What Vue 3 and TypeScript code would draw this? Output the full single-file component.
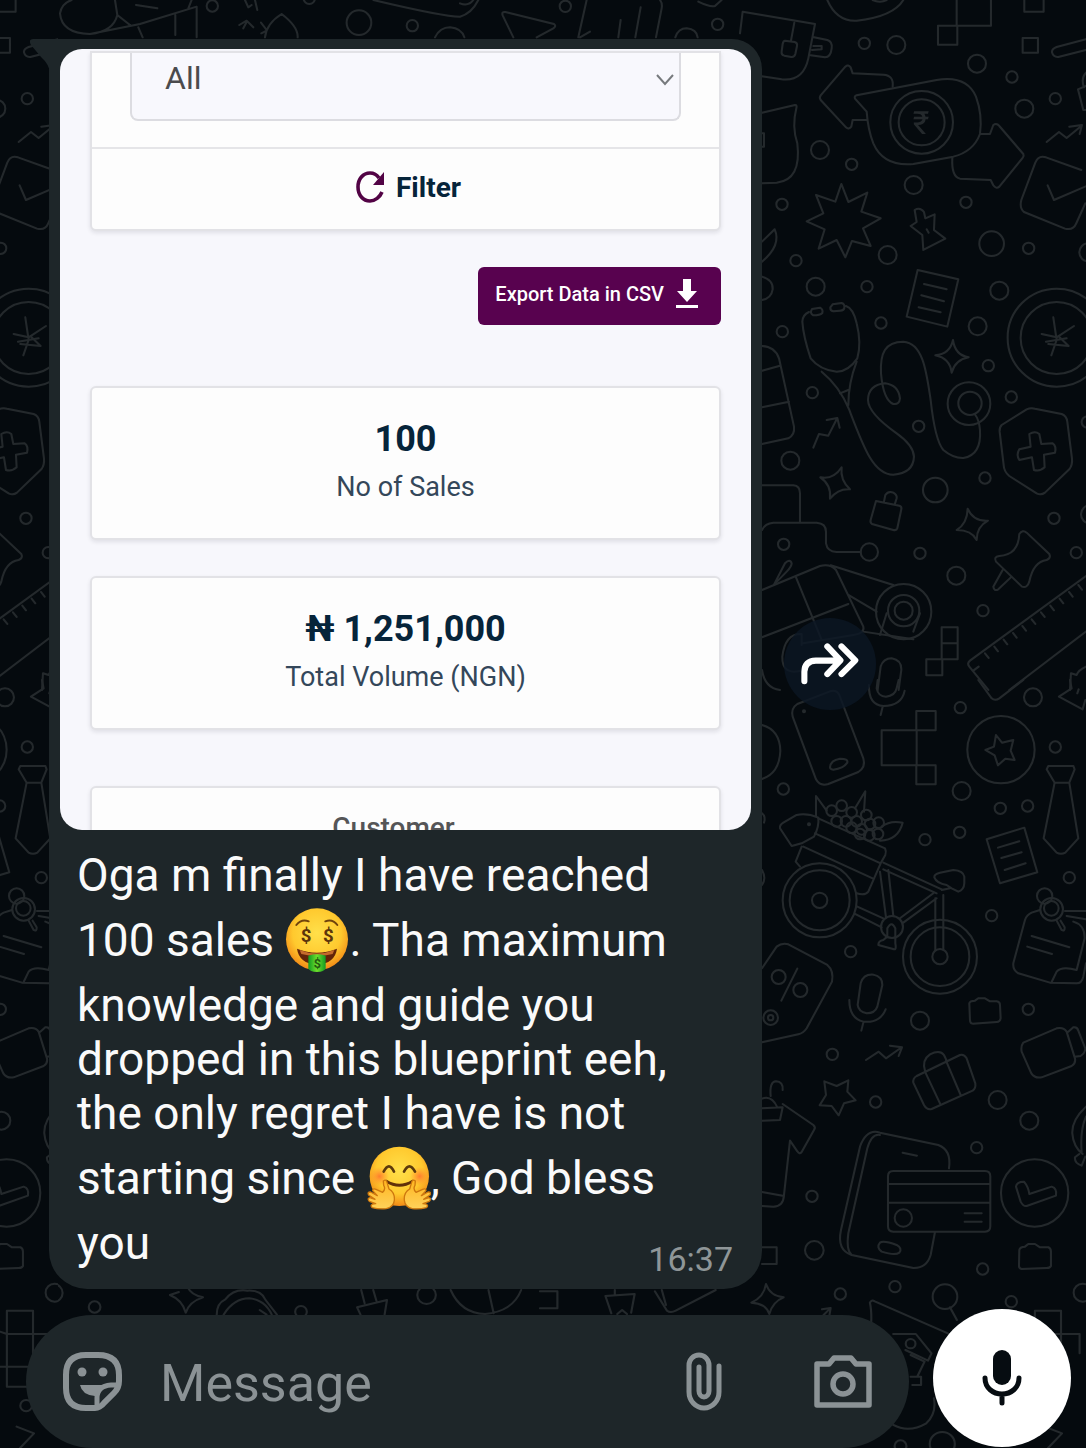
<script setup lang="ts">
import { ref } from 'vue'

interface Doodle {
  transform: string
  /** x, y, radius */
  circles: number[][]
  paths: string[]
}

const draft = ref('')
const filter = ref('All')

const stats = [
  { value: '100', label: 'No of Sales' },
  { value: '₦ 1,251,000', label: 'Total Volume (NGN)' },
]

// Wallpaper line art, grouped by area. Each group has its own local grid.
const doodles: Doodle[] = [
  {
    transform: 'scale(.3333)',
    circles: [[637, 18, 17], [1077, 68, 37], [928, -5, 17]],
    paths: [
      'M345 0L352 45Q340 95 270 102Q185 100 180 40Q185 10 215 0M352 45L390 75M270 102L420 72L590 20V112M526 45V105M415 82L428 112M408 15L472 25M575 0L565 25',
      'M735 0L745 22L755 15M765 0L772 30M718 75L740 62L760 82M730 85L740 66M783 68L800 90M795 112Q800 70 845 42Q895 80 893 112M784 100L800 92',
    ],
  },
  {
    transform: 'translate(400 0) scale(.3333)',
    circles: [[37, 77, 17], [496, 19, 17], [953, 73, 17]],
    paths: [
      'M-80 0Q130 50 180 50Q215 40 235 0M180 10Q205 20 220 0M105 112Q120 82 150 82Q185 85 193 112M340 112L308 46Q304 35 316 36L462 72Q470 78 460 85L410 112',
      'M560 0L535 112M780 0Q788 10 785 25L768 112M722 22L706 112M662 60L655 112M540 112L570 95M826 112Q835 85 860 85Q890 88 893 112M895 5Q930 22 945 18L965 0',
    ],
  },
  {
    transform: 'translate(740 0) scale(.3333)',
    circles: [
      [373, 130, 17], [816, 231, 17], [946, 296, 17], [335, 493, 17], [126, 613, 17], [678, 607, 17],
      [866, 745, 17], [168, 782, 17], [381, 860, 17], [423, 969, 17], [127, 995, 17],
      [469, 135, 27], [711, 191, 27], [853, 326, 27], [240, 450, 27], [521, 555, 27], [443, 765, 27],
      [227, 860, 27], [778, 872, 27], [713, 979, 27], [755, 731, 37], [1045, 757, 27],
      [545, 367, 94], [545, 367, 69], [950, 1013, 147], [950, 1014, 108],
    ],
    paths: [
      'M0 100L8 35L225 72L205 175Q190 245 125 238L60 228M163 68L153 122M135 122L164 126Q173 128 171 138L166 162Q163 172 154 171L133 167Q123 164 125 154L128 132Q130 122 135 122ZM222 112L262 120Q278 125 275 145Q272 172 255 172L212 166M220 138H245V148L216 150',
      'M262 0Q290 65 350 62Q460 50 490 0M398 0Q420 10 440 0',
      'M650 0V77H753V0M594 77H652V134H594ZM853 0V35H911V0M848 114H894V158H848Z',
      'M1038 118L950 141Q935 147 936 157Q940 172 955 171L1038 150M1038 218Q1022 235 1032 262M1038 258L1014 268L1030 330H1038',
      'M920 426L957 396L980 414L1024 378M988 380L1026 375L1019 402',
      'M458 260Q462 226 430 224L338 220L332 202Q325 192 316 200L242 286Q237 293 242 300L318 382Q326 390 334 380L338 360H380',
      'M350 286L590 240Q680 225 708 290Q728 345 720 402Q700 455 640 470L520 492Q430 500 400 430Q384 390 380 335L345 296Q342 288 350 286Z',
      'M722 402H750L760 375Q770 368 778 378L850 462Q853 468 848 474L778 560Q768 568 760 556L752 540L660 536Q634 530 637 474',
      'M1024 510L918 472Q895 465 886 488L844 600Q838 625 852 636L975 686Q1000 692 1008 672L1036 610M923 556L942 600L1040 558',
      'M66 338L165 315Q172 315 169 325Q155 380 172 430Q185 540 110 548L66 550M66 400H72V440H66',
      'M304 552L325 606L382 578L364 635L422 655L369 685L392 738L336 723L316 772L290 720L236 746L254 688L200 664L250 640L228 585L286 605Z',
      'M524 630Q540 620 552 636L556 655L584 643L582 690L616 716L550 750L547 705L512 678L530 666ZM560 688L566 698',
      'M66 725L104 688Q125 735 66 785M66 830Q100 840 98 868Q94 895 66 900',
      'M533 810L655 838L622 980L500 950ZM552 852L620 868M544 886L612 904M536 922L602 937',
    ],
  },
  {
    transform: 'translate(740 330) scale(.3333)',
    circles: [
      [217, 188, 17], [745, 107, 17], [814, 201, 17], [536, 289, 17], [735, 444, 17], [131, 643, 17],
      [540, 670, 17], [942, 565, 17], [1009, 668, 17], [729, 842, 17], [1042, 276, 17],
      [151, 392, 27], [388, 666, 26], [649, 737, 27], [1050, 553, 27], [586, 480, 37],
      [491, 845, 83], [491, 842, 47], [491, 842, 27], [687, 221, 64], [690, 220, 35],
    ],
    paths: [
      'M318 -72Q340 -65 350 -20Q365 40 352 85Q325 125 290 125Q240 120 212 85Q190 20 187 -25Q188 -46 207 -54M278 -77L305 -81Q315 -78 313 -66Q312 -59 300 -58L280 -56Q270 -58 271 -68ZM216 -63L240 -67Q250 -62 247 -51Q240 -44 220 -44Q208 -50 216 -63Z',
      'M245 125Q300 170 328 240C370 350 400 434 460 434Q520 430 522 380Q520 345 470 310Q385 250 384 210Q385 165 435 160Q475 165 480 205Q478 225 460 222Q430 210 423 130C420 70 435 35 490 35C550 38 560 130 572 210Q585 330 610 360Q640 385 670 384Q725 375 720 300Q718 270 704 252M350 95Q325 160 325 225M300 190L325 180',
      'M940 -38L950 30L934 76M1002 -12L950 22L905 12M918 35L980 25M925 42L986 48L955 18',
      'M639 30Q645 75 686 82Q645 90 635 128Q630 85 586 76Q630 72 639 30ZM305 412Q300 450 330 478Q295 475 270 506Q275 465 241 442Q280 450 305 412ZM683 536Q700 575 744 572Q710 590 710 630Q695 600 650 600Q682 580 683 536Z',
      'M220 353L237 312L265 317L290 268M260 270L292 264L299 293',
      'M66 48Q105 50 117 85L162 290Q165 315 145 325L66 342M66 122L120 107M66 232L147 215',
      'M785 285L860 238Q872 233 885 236L965 252Q980 258 982 275L996 385Q998 405 988 418L915 488Q903 497 890 490L808 438Q792 425 791 405L779 305Q778 292 785 285Z',
      'M868 312Q885 302 898 312L904 342L938 340Q950 348 945 368L912 374L914 412Q900 425 882 420L876 382L838 390Q828 375 838 358L872 350Z',
      'M408 513L478 527Q486 530 484 538L472 595Q470 602 460 600L396 582Q390 578 392 570ZM432 515L436 495Q445 482 460 488Q472 495 470 505L464 524',
      'M66 466H160Q180 467 180 490V576M66 600Q75 580 100 578H230Q258 580 258 605V640Q262 665 290 666H362M102 764L135 700Q150 685 155 700Q155 710 140 725Z',
      'M66 780L240 708Q270 700 288 720L370 890Q375 910 340 915L190 940M168 742L245 930M66 922L325 822M272 706L460 765M325 795L410 845M370 905L520 928M420 915L440 850M520 905L540 850M190 1020Q125 1040 127 980Q135 910 185 912V945M66 1020Q75 1075 120 1080',
      'M838 612Q848 598 860 608L928 672Q934 684 920 690Q880 695 868 755Q862 775 846 770L768 695Q760 680 778 678Q835 675 838 612ZM788 720L760 770Q762 785 775 778L815 740',
      'M1038 738L690 992Q680 1000 688 1010L745 1080M1038 905L808 1080M700 1022L716 1010M735 970L746 984M763 950L774 964M791 929L802 943M819 909L830 923M847 888L858 902M875 868L886 882M903 847L914 861M931 827L942 841M959 806L970 820M987 786L998 800M1015 765L1026 779',
      'M605 892H653V988H605ZM605 940H653M559 988H607V1036H559ZM413 1080L422 1010Q430 985 455 985Q485 990 484 1020L476 1080M1038 1010Q1015 1020 1010 1035L993 1030L990 1080',
    ],
  },
  {
    transform: 'translate(740 680) scale(.3333)',
    circles: [
      [661, 83, 17], [946, 201, 17], [130, 327, 17], [781, 385, 17], [863, 378, 17], [659, 457, 17],
      [555, 479, 17], [988, 593, 17], [755, 707, 17], [332, 815, 17], [865, 988, 17],
      [879, 52, 27], [665, 333, 27], [540, 1022, 27], [783, 209, 101],
      [239, 661, 111], [239, 661, 90], [239, 661, 23], [600, 830, 111], [600, 830, 88], [600, 830, 23], [456, 741, 33],
      [275, 392, 16], [305, 377, 16], [335, 397, 16], [290, 424, 16], [318, 424, 16], [350, 424, 16], [379, 405, 16],
      [335, 443, 16], [365, 448, 16], [390, 432, 16], [416, 428, 16], [360, 462, 16], [388, 466, 16], [414, 462, 16],
      [116, 891, 21], [181, 930, 21], [92, 1013, 22], [92, 1013, 8], [914, 648, 23], [934, 685, 22], [935, 688, 34], [192, 94, 3], [207, 433, 3],
    ],
    paths: [
      'M413 0L410 25Q415 50 438 50Q465 48 470 25L476 0M387 15Q385 75 430 78Q485 78 494 32M428 80L422 105',
      'M66 135Q120 150 121 213Q118 280 66 297M66 400Q78 410 72 428M66 570Q80 595 66 615',
      'M172 72L270 34Q290 28 298 45L370 235Q378 262 355 276L265 312Q240 320 228 298L158 110Q152 85 172 72ZM270 262Q272 240 300 236Q325 236 322 248Q310 266 280 269Q270 268 270 262Z',
      'M425 151H530V256H425ZM529 93H587V151H529ZM529 256H587V313H529Z',
      'M768 165L786 188L820 180L812 212L824 240L796 236L774 256L764 226L736 210L762 200Z',
      'M925 258H1000L1004 268L988 308H944L920 268ZM944 308L911 475L950 518Q963 525 976 518L1015 475L988 308',
      'M740 478L853 443L892 577L780 610ZM774 503L838 484M784 534L845 517M794 570L857 550',
      'M715 0L755 55Q765 64 778 55L850 0M990 0L995 25L957 50L1028 88L1036 60M1012 40L1016 28',
      'M120 445Q118 435 130 428L170 405Q200 398 235 413Q238 440 222 470L185 490L155 498ZM228 410V348L260 392M345 385L376 334L372 395M425 440Q450 420 488 428Q475 480 420 482',
      'M235 415L435 505Q440 515 436 525L422 550L225 460M190 500L398 595M185 500L167 545L180 560M422 550L385 635Q375 648 350 640',
      'M430 548L605 628M430 568L590 640M420 575L438 712M445 570L460 708M480 715L580 640M490 728L590 655M352 680L430 715M345 702L425 742M586 655V810M610 645V810M605 630L630 625M635 625L655 635Q672 630 673 610V590Q670 572 640 570L600 578Q582 582 583 592Q590 610 620 615Z',
      'M442 770V745Q455 720 466 745V790Q470 810 462 808L415 795Q415 782 430 780Z',
      'M66 865L110 800Q125 788 145 793L262 855Q282 872 276 905L200 1045Q190 1060 175 1063L66 1087M172 866L124 962',
      'M362 910Q370 882 400 884Q428 890 427 915L412 980Q405 1000 380 1000Q355 995 353 975ZM328 960Q328 1015 370 1025Q420 1030 437 988M370 1028L364 1052',
      'M688 970Q690 962 705 962L715 955H735L750 964H770Q780 965 780 975L782 1015Q780 1026 770 1026L698 1031Q690 1030 690 1020Z',
      'M900 690L875 698Q860 705 855 720L820 850Q818 870 835 880L930 908L1010 910Q1025 910 1030 890L1038 850M975 693H1038M980 708L1038 718M1000 725Q1035 735 1034 775L1010 870M875 768L988 802M862 800L936 822M935 906L950 875Q965 858 1010 870M950 722L965 750Q975 755 974 742L962 722',
    ],
  },
  {
    transform: 'translate(740 1020) scale(.3333)',
    circles: [
      [277, 103, 17], [407, 246, 17], [710, 383, 17], [216, 529, 17], [728, 747, 17], [465, 800, 17], [301, 822, 17],
      [814, 845, 17], [773, 240, 27], [868, 302, 27], [223, 691, 28], [1028, 818, 27], [615, 830, 37], [884, 519, 101], [490, 594, 26],
    ],
    paths: [
      'M850 68L950 25Q970 20 980 35L1005 115Q1008 130 995 138L905 172Q885 176 874 160L845 95Q842 78 850 68ZM985 35L1000 22Q1012 20 1015 32L1036 85Q1036 100 1022 108L1004 110',
      'M378 120L416 95L438 115L482 84M450 77L486 82L476 108',
      'M530 168L660 105Q672 102 680 115L706 190Q708 205 698 212L575 267Q560 270 552 255L520 188Q518 175 530 168ZM555 155L600 250M618 122L662 225M555 152Q545 120 570 103Q600 88 612 105L620 122',
      'M253 184L290 198L325 181L322 215L347 241L312 250L296 286L275 258L239 256L258 225Z',
      'M92 228Q88 185 108 184Q130 185 128 210M66 236Q95 225 112 262M66 265L128 262L120 300L66 302M128 252L220 315Q228 322 222 330L185 396Q178 404 172 394L150 362L132 525Q130 560 100 560L66 558M66 516L132 528',
      'M627 445Q635 390 595 375L420 338Q380 325 360 380L303 630Q290 690 335 705L520 744Q560 745 572 705L585 636M420 345Q395 340 382 385L325 640Q318 690 335 705M488 398L531 407',
      'M420 668Q430 660 470 675Q488 685 478 698Q465 708 425 695Q408 682 420 668Z',
      'M460 453H735Q751 453 751 469V619Q751 635 735 635H460Q444 635 444 619V469Q444 453 460 453ZM444 492H751M444 548H751M674 580H725M674 605H725',
      'M828 500Q830 485 852 485Q865 500 868 522L935 500Q952 505 948 527L860 558Q850 560 842 545Z',
      'M838 690Q840 680 855 680L865 672H885L900 682H925Q933 685 933 695V738Q930 744 920 744L845 747Q837 745 837 738Z',
      'M1038 260Q995 300 997 340Q1000 380 1028 402M1038 290Q1020 330 1025 395M1018 402L1005 412Q1003 430 1025 437L1036 410',
      'M66 682H110V732H66M78 792Q90 828 131 832Q98 845 88 882Q78 850 34 848Q72 832 78 792ZM246 868L272 864L268 888M250 886L270 866',
    ],
  },
  {
    transform: 'translate(540 1270) scale(.348 .3333)',
    circles: [[1065, 221, 14], [1156, 522, 36], [1036, 528, 17]],
    paths: [
      'M950 190Q955 130 948 98Q952 88 962 94L1172 190M1178 112L1198 150M1015 192H1080L1125 250L1115 272L1050 240M1065 255L1105 275L1085 318M1065 320H1095V345H1070M1015 465Q1060 490 1110 460Q1140 430 1132 385M1450 470L1500 490L1460 534',
      'M0 64H50V115H0M188 78L272 72L262 128M188 78L205 130M215 60V75M330 64L365 122Q375 130 390 122L505 60M350 60L362 105M222 132L236 120L250 132',
    ],
  },
  {
    transform: 'translate(1028 1270) scale(.344 .3333)',
    circles: [[76, 407, 17]],
    paths: ['M20 122H96V350H20ZM0 185L20 192H150V250M0 290H80'],
  },
  {
    transform: 'translate(0 1270) scale(.344 .3333)',
    circles: [[155, 69, 27], [275, 111, 17], [875, 125, 17], [1240, 75, 27]],
    paths: [
      'M545 50Q555 75 590 82Q550 95 540 128Q530 90 494 75L520 66M630 134Q630 100 655 88Q680 55 720 62Q760 60 772 90L805 134M650 134Q680 85 725 85Q770 90 790 134M755 120L775 134',
      'M1050 60L1060 100M1085 60L1095 95M1038 112L1125 90L1118 134M1038 112L1048 134M1310 60Q1340 130 1410 132Q1490 125 1515 60M1420 60L1435 130',
    ],
  },
]
</script>

<template>
  <div class="chat">
    <svg class="wallpaper" aria-hidden="true">
      <defs>
        <pattern id="doodles" x="58" y="0" width="1028" height="1448" patternUnits="userSpaceOnUse">
          <g transform="translate(-58 0)">
            <g v-for="(area, i) in doodles" :key="i" :transform="area.transform">
              <circle v-for="(c, j) in area.circles" :key="'c' + j" :cx="c[0]" :cy="c[1]" :r="c[2]" />
              <path v-for="(d, j) in area.paths" :key="'p' + j" :d="d" />
            </g>
            <text class="coin" x="921" y="134" text-anchor="middle">₹</text>
          </g>
        </pattern>
      </defs>
      <rect width="100%" height="100%" fill="url(#doodles)" stroke="none" />
    </svg>

    <main class="thread">
      <article class="bubble">
        <svg class="tail" viewBox="0 0 20 34" aria-hidden="true"><path d="M3 0H20V34Q19 25 11 18L1 6Q-2 0 3 0Z" fill="#1e2629" /></svg>

        <section class="shot" aria-label="Sales dashboard">
          <div class="filter-card">
            <div class="field">
              <select v-model="filter" aria-label="Filter by">
                <option>All</option>
              </select>
              <svg class="chevron" viewBox="0 0 20 14" aria-hidden="true"><path d="M2 2L10 11L18 2" fill="none" stroke="#777a7d" stroke-width="2" /></svg>
            </div>
            <button class="apply" type="button">
              <svg viewBox="0 0 28 32" aria-hidden="true">
                <path d="M26 21C24 26 19 30 14 30C7 30 2 24 2 16C2 8 7 2 14 2C18 2 21 4 23 7" fill="none" stroke="#520345" stroke-width="3.6" />
                <path d="M28 1V14H17Z" fill="#520345" />
              </svg>
              Filter
            </button>
          </div>

          <button class="export" type="button">
            Export Data in CSV
            <svg viewBox="0 0 22 30" aria-hidden="true"><path d="M7 0H15V12H21L11 23L1 12H7ZM0 26H22V29H0Z" fill="#fff" /></svg>
          </button>

          <div v-for="stat in stats" :key="stat.label" class="stat">
            <strong>{{ stat.value }}</strong>
            <span>{{ stat.label }}</span>
          </div>

          <div class="customer">Customer</div>
        </section>

        <p class="caption">
          Oga m finally I have reached 100 sales
          <span class="nowrap"><svg class="emoji" viewBox="0 0 192 192" role="img" aria-label="money-mouth face">
            <defs>
              <radialGradient id="face" cx=".5" cy=".4" r=".6">
                <stop offset="0" stop-color="#ffe04a" />
                <stop offset=".65" stop-color="#ffc92e" />
                <stop offset="1" stop-color="#f28a16" />
              </radialGradient>
              <linearGradient id="note" x1="0" x2="1">
                <stop offset="0" stop-color="#109a22" />
                <stop offset=".5" stop-color="#6fe02c" />
                <stop offset="1" stop-color="#109a22" />
              </linearGradient>
            </defs>
            <circle cx="96" cy="94" r="93" fill="url(#face)" />
            <path d="M34 51Q50 31 71 40M121 40Q142 31 157 51" fill="none" stroke="#70430c" stroke-width="6" stroke-linecap="round" />
            <text class="dollar" x="63" y="102" text-anchor="middle">$</text>
            <text class="dollar" x="130" y="102" text-anchor="middle">$</text>
            <path d="M36 122Q96 146 156 122Q150 166 96 170Q42 166 36 122Z" fill="#632309" />
            <path d="M44 126Q96 147 148 126L143 138Q96 151 49 138Z" fill="#c56a2c" />
            <path d="M70 143Q96 135 122 143V181Q118 192 96 192Q74 192 70 181Z" fill="url(#note)" />
            <text class="dollar small" x="97" y="180" text-anchor="middle">$</text>
          </svg>.</span>
          Tha maximum knowledge and guide you dropped in this blueprint eeh, the only regret I have is not starting since
          <span class="nowrap"><svg class="emoji" viewBox="0 0 192 192" role="img" aria-label="hugging face">
            <defs>
              <radialGradient id="cheek">
                <stop offset="0" stop-color="#ff6b2c" stop-opacity=".8" />
                <stop offset="1" stop-color="#ff8a2c" stop-opacity="0" />
              </radialGradient>
              <linearGradient id="hand" x1="0" y1="0" x2="0" y2="1">
                <stop offset="0" stop-color="#ffb520" />
                <stop offset="1" stop-color="#ffd25a" />
              </linearGradient>
            </defs>
            <circle cx="97" cy="91" r="89" fill="url(#face)" />
            <circle cx="37" cy="91" r="29" fill="url(#cheek)" />
            <circle cx="158" cy="91" r="29" fill="url(#cheek)" />
            <path d="M50 77Q66 45 81 77M111 77Q127 45 144 77" fill="none" stroke="#5c3a0c" stroke-width="8" stroke-linecap="round" />
            <path d="M58 106Q97 130 137 106" fill="none" stroke="#61300a" stroke-width="9" stroke-linecap="round" />
            <g fill="url(#hand)" stroke="#ce780e" stroke-width="4" stroke-linejoin="round">
              <path d="M49 105Q58 97 61 112L66 129Q84 139 82 163Q80 183 58 188Q35 190 16 185Q8 179 17 174L26 173L7 166Q-1 157 9 155L24 160L5 147Q0 137 11 138L31 149L17 134Q17 126 27 130L47 139Q57 129 50 118Z" />
              <path d="M49 105Q58 97 61 112L66 129Q84 139 82 163Q80 183 58 188Q35 190 16 185Q8 179 17 174L26 173L7 166Q-1 157 9 155L24 160L5 147Q0 137 11 138L31 149L17 134Q17 126 27 130L47 139Q57 129 50 118Z" transform="matrix(-1 0 0 1 194 0)" />
            </g>
          </svg>,</span>
          God bless you
          <time datetime="16:37">16:37</time>
        </p>
      </article>

      <button class="forward" type="button" aria-label="Forward">
        <svg viewBox="186 940 172 124" aria-hidden="true">
          <path d="M196 1053V1025Q197 993 230 992H300M264 950L303 991L264 1032M306 950L347 991L306 1032" fill="none" stroke="#fff" stroke-width="18" stroke-linecap="round" stroke-linejoin="round" />
        </svg>
      </button>
    </main>

    <footer class="composer">
      <div class="pill">
        <button type="button" aria-label="Stickers">
          <svg width="59" height="60" viewBox="0 0 59 60" fill="none" stroke="#8b9295" stroke-width="6" aria-hidden="true">
            <path d="M32 56H23Q3 56 3 36V23Q3 3 23 3H35Q56 3 56 23V29Q56 36 51 41L41 51Q37 56 32 56Z" />
            <path d="M55 33H48Q34 34 34 46V55" stroke-width="5" />
            <path d="M17 33H46Q34 35 32 44Q19 43 17 33Z" fill="#8b9295" stroke="none" />
            <circle cx="19" cy="20" r="4.5" fill="#8b9295" stroke="none" />
            <circle cx="40" cy="20" r="4.5" fill="#8b9295" stroke="none" />
          </svg>
        </button>
        <input v-model="draft" type="text" placeholder="Message" aria-label="Message" />
        <button type="button" aria-label="Attach">
          <svg width="36" height="59" viewBox="0 0 36 59" fill="none" stroke="#8b9295" stroke-width="5" stroke-linecap="round" aria-hidden="true">
            <path d="M33 14V40A15 16 0 0 1 3 40V13A10 10 0 0 1 23 13V39A5 6 0 0 1 13 39V15" />
          </svg>
        </button>
        <button type="button" aria-label="Camera">
          <svg width="58" height="53" viewBox="0 0 58 53" fill="none" stroke="#8b9295" stroke-width="5.5" stroke-linejoin="round" aria-hidden="true">
            <path d="M3 9H15L20 3H37L42 9H55V50H3Z" />
            <circle cx="29" cy="29" r="10" />
          </svg>
        </button>
      </div>
      <button class="mic" type="button" aria-label="Record voice message">
        <svg width="40" height="56" viewBox="0 0 40 56" aria-hidden="true">
          <rect x="11" y="0" width="18" height="35" rx="9" fill="#060c11" />
          <path d="M3 28C3 38 11 44 20 44S37 38 37 28M20 44V53" fill="none" stroke="#060c11" stroke-width="5" stroke-linecap="round" />
        </svg>
      </button>
    </footer>
  </div>
</template>

<style>
body {
  background: #050a0e;
}
</style>

<style scoped>
.chat {
  position: relative;
  display: flex;
  flex-direction: column;
  gap: 20px;
  box-sizing: border-box;
  min-height: 100vh;
  padding-top: 39px;
  overflow: hidden;
  background: #050a0e;
  font-family: Roboto, 'Liberation Sans', sans-serif;
}

button {
  padding: 0;
  border: 0;
  background: none;
  font: inherit;
  cursor: pointer;
}

svg {
  display: block;
}

.wallpaper {
  position: absolute;
  inset: 0;
  width: 100%;
  height: 100%;
  fill: none;
  stroke: #24292c;
  stroke-width: 6px;
  stroke-linecap: round;
  stroke-linejoin: round;
}

.coin {
  fill: #24292c;
  stroke: none;
  font-size: 32px;
}

.thread {
  position: relative;
  display: flex;
  align-items: center;
  gap: 22px;
  padding: 0 210px 0 49px;
}

.bubble {
  position: relative;
  flex: 1;
  min-width: 0;
  box-sizing: border-box;
  padding: 10px 11px;
  border-radius: 0 30px 38px 38px;
  background: #1e2629;
}

.tail {
  position: absolute;
  top: 0;
  left: -19px;
  width: 20px;
  height: 34px;
}

.shot {
  display: flex;
  flex-direction: column;
  box-sizing: border-box;
  height: 781px;
  padding: 2px 30px 0;
  overflow: hidden;
  border-radius: 22px;
  background: #f7f7fc;
}

.filter-card,
.stat,
.customer {
  box-sizing: border-box;
  flex-shrink: 0;
  border: 2px solid #e2e2e6;
  border-radius: 6px;
  background: #fdfdfd;
  box-shadow: 0 2px 4px rgba(20, 20, 40, 0.1);
}

.filter-card {
  height: 180px;
  border-top-left-radius: 0;
  border-top-right-radius: 0;
}

.field {
  position: relative;
  box-sizing: border-box;
  height: 96px;
  padding: 0 38px;
  border-bottom: 2px solid #e5e5e8;
}

.field select {
  box-sizing: border-box;
  width: 100%;
  height: 68px;
  padding: 0 33px 16px;
  border: 2px solid #dcdce1;
  border-top: 0;
  border-radius: 0 0 8px 8px;
  background: #f8f8fd;
  color: #4b4b4d;
  font: 32px Roboto, sans-serif;
  appearance: none;
}

.chevron {
  position: absolute;
  top: 20px;
  right: 44px;
  width: 20px;
  height: 14px;
}

.apply {
  display: flex;
  align-items: center;
  justify-content: center;
  gap: 12px;
  box-sizing: border-box;
  width: 100%;
  height: 78px;
  padding: 0 0 2px 6px;
  color: #06243a;
  font-size: 28px;
  font-weight: 700;
}

.apply svg {
  width: 28px;
  height: 32px;
}

.export {
  display: flex;
  flex-shrink: 0;
  align-items: center;
  align-self: flex-end;
  gap: 12px;
  height: 58px;
  margin: 36px 0 61px;
  padding: 0 23px 4px 17px;
  border-radius: 6px;
  background: #58024f;
  color: #fff;
  font-size: 20px;
  font-weight: 500;
}

.export svg {
  width: 22px;
  height: 30px;
}

.stat {
  display: flex;
  flex-direction: column;
  align-items: center;
  height: 154px;
  margin-bottom: 36px;
  padding-top: 26px;
  color: #34475a;
  font-size: 27px;
  line-height: 46px;
}

.stat strong {
  color: #06243a;
  font-size: 36px;
  line-height: 50px;
}

.customer {
  height: 90px;
  margin-top: 20px;
  padding: 24px 24px 0 0;
  color: #555557;
  font-size: 28px;
  font-weight: 500;
  line-height: 32px;
  text-align: center;
}

.caption {
  display: flow-root;
  margin: 18px 0 0;
  padding: 0 48px 0 17px;
  color: #fafafa;
  font-size: 46px;
  line-height: 54px;
}

.caption time {
  float: right;
  margin: 23px -30px 0 0;
  color: #8f9698;
  font-size: 34px;
  line-height: 40px;
}

.nowrap {
  white-space: nowrap;
}

.emoji {
  display: inline-block;
  width: 64px;
  height: 64px;
  margin: 6px 0;
  vertical-align: -22px;
}

.dollar {
  fill: #5c350b;
  font-size: 56px;
  font-weight: 700;
}

.small {
  fill: #245b10;
  font-size: 38px;
}

.forward {
  display: grid;
  flex-shrink: 0;
  place-items: center;
  width: 92px;
  height: 92px;
  border-radius: 50%;
  background: rgba(11, 23, 36, 0.8);
}

.forward svg {
  width: 58px;
  height: 42px;
}

.composer {
  position: relative;
  display: flex;
  align-items: flex-end;
  gap: 24px;
  margin-top: auto;
  padding: 0 15px 0 26px;
}

.pill {
  display: flex;
  flex: 1;
  align-items: center;
  box-sizing: border-box;
  min-width: 0;
  height: 133px;
  padding: 0 37px;
  border-radius: 67px;
  background: #1e2629;
}

.pill input {
  flex: 1;
  min-width: 0;
  margin: 4px 20px 0 38px;
  padding: 0;
  border: 0;
  outline: 0;
  background: none;
  color: #fafafa;
  font: 52px Roboto, sans-serif;
}

.pill input::placeholder {
  color: #8b9295;
  opacity: 1;
}

.pill button + button {
  margin-left: 92px;
}

.mic {
  display: grid;
  flex-shrink: 0;
  place-items: center;
  width: 138px;
  height: 138px;
  margin-bottom: 1px;
  border-radius: 50%;
  background: #fff;
}
</style>
